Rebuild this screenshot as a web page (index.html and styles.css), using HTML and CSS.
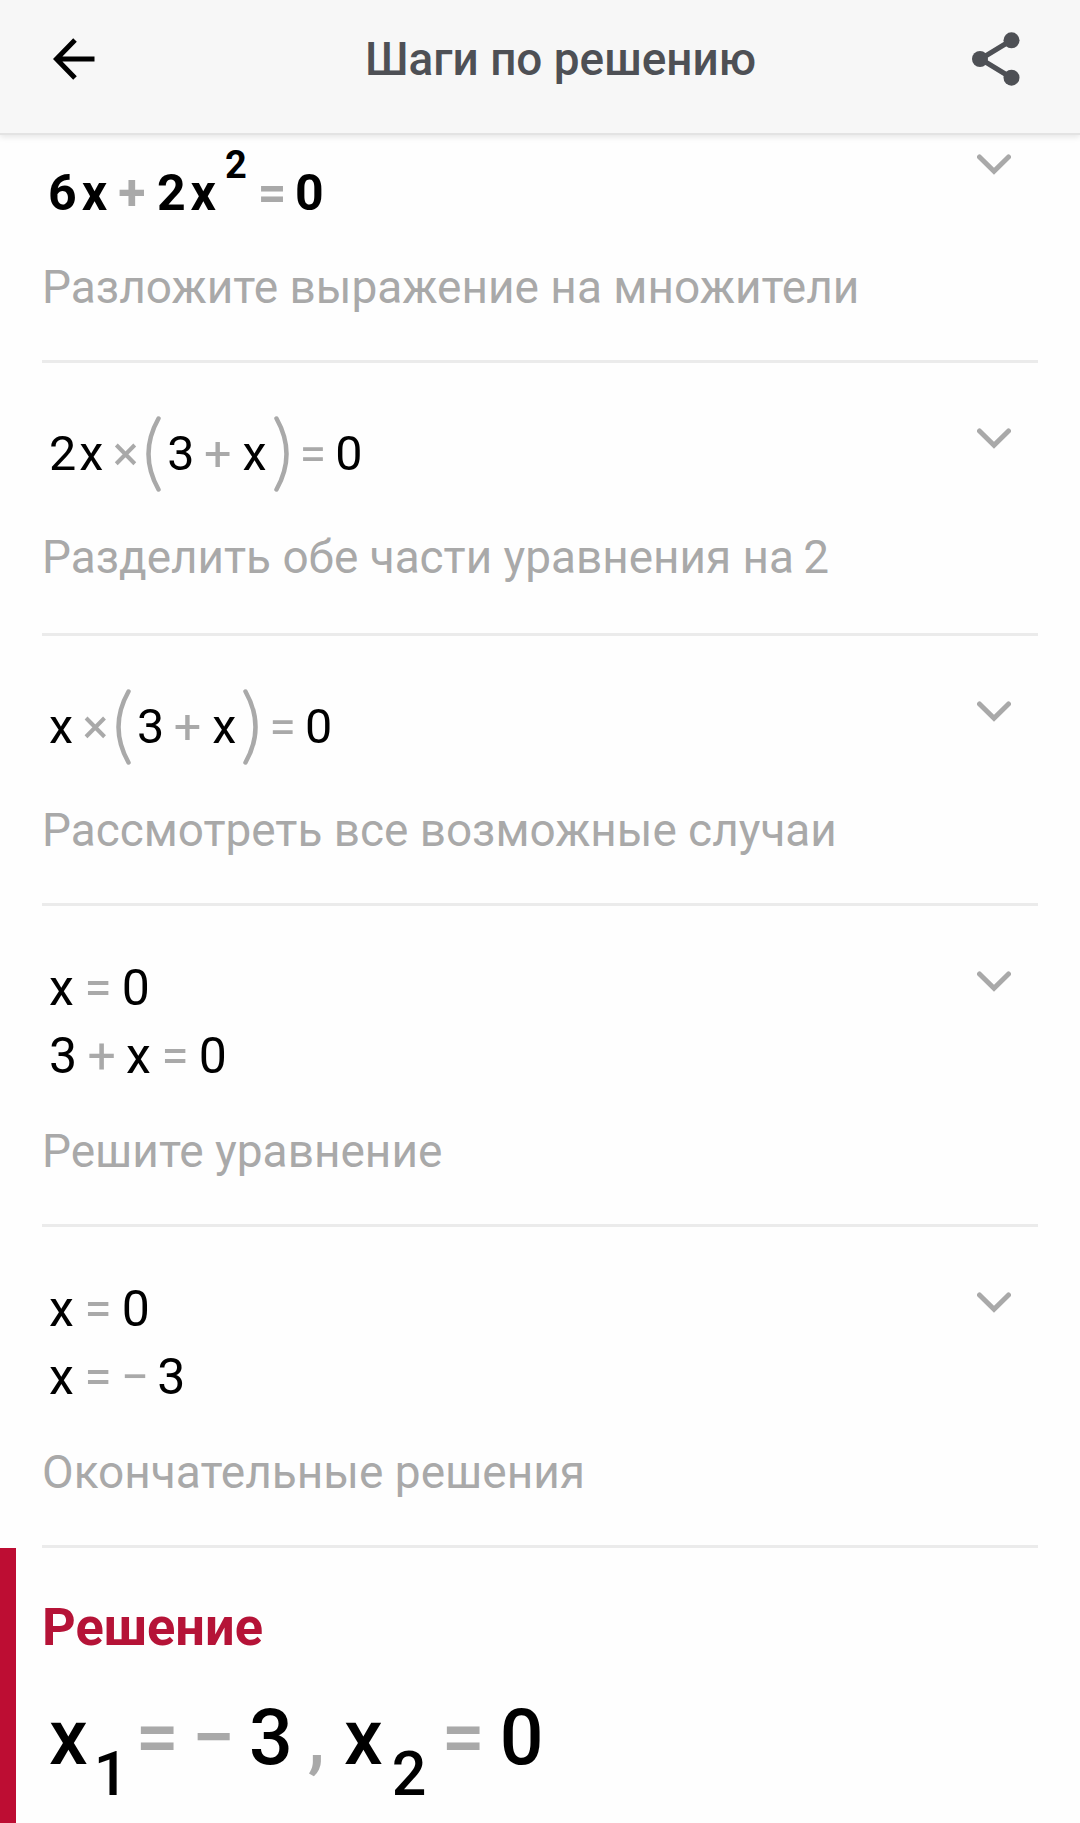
FILE: index.html
```html
<!DOCTYPE html>
<html lang="ru">

<head>
    <meta charset="UTF-8">
    <meta name="viewport" content="width=device-width, initial-scale=1.0">

    <title>Шаги по решению</title>
    <link rel="stylesheet" href="styles.css">
</head>
<body>
    <header class="topbar">
        <svg class="back" viewBox="0 0 42 42"><path d="M41.500 21H4M22 2L3.500 21L22 40" fill="none" stroke="#000" stroke-width="5"/></svg>
        <h1>Шаги по решению</h1>
        <svg class="share" viewBox="0 0 48 54">
            <path d="M39 8.500L8.500 27L39 45.500" fill="none" stroke="#4e5055" stroke-width="5"/>
            <circle cx="39.500" cy="8.300" r="8"/>
            <circle cx="8" cy="27" r="8"/>
            <circle cx="39.500" cy="45.700" r="8"/>
        </svg>
    </header>

    <main>
        <section class="step first">
            <div class="eq bold">
                <span>6</span><span class="near">x</span><i>+</i><span>2</span><span class="near">x</span><sup>2</sup><i>=</i><span class="last">0</span>
            </div>
            <svg class="chevron" viewBox="0 0 34 21"><path d="M2.500 3L17 17.300L31.500 3"/></svg>
            <p>Разложите выражение на множители</p>
        </section>

        <section class="step product tall">
            <div class="eq">
                <span>2</span><span class="near">x</span><i>×</i><svg class="paren" viewBox="0 0 15 76"><path d="M12.500 2.500Q-7.500 38 12.500 73.500"/></svg><span>3</span><i>+</i><span>x</span><svg class="paren right" viewBox="0 0 15 76"><path d="M2.500 2.500Q22.500 38 2.500 73.500"/></svg><i>=</i><span class="last">0</span>
            </div>
            <svg class="chevron" viewBox="0 0 34 21"><path d="M2.500 3L17 17.300L31.500 3"/></svg>
            <p>Разделить обе части уравнения на <span class="num">2</span></p>
        </section>

        <section class="step product">
            <div class="eq">
                <span>x</span><i>×</i><svg class="paren" viewBox="0 0 15 76"><path d="M12.500 2.500Q-7.500 38 12.500 73.500"/></svg><span>3</span><i>+</i><span>x</span><svg class="paren right" viewBox="0 0 15 76"><path d="M2.500 2.500Q22.500 38 2.500 73.500"/></svg><i>=</i><span class="last">0</span>
            </div>
            <svg class="chevron" viewBox="0 0 34 21"><path d="M2.500 3L17 17.300L31.500 3"/></svg>
            <p>Рассмотреть все возможные случаи</p>
        </section>

        <section class="step pair">
            <div class="eq"><span>x</span><i>=</i><span>0</span></div>
            <div class="eq"><span>3</span><i>+</i><span>x</span><i>=</i><span>0</span></div>
            <svg class="chevron" viewBox="0 0 34 21"><path d="M2.500 3L17 17.300L31.500 3"/></svg>
            <p>Решите уравнение</p>
        </section>

        <section class="step pair">
            <div class="eq"><span>x</span><i>=</i><span>0</span></div>
            <div class="eq"><span>x</span><i>=</i><i class="minus">−</i><span>3</span></div>
            <svg class="chevron" viewBox="0 0 34 21"><path d="M2.500 3L17 17.300L31.500 3"/></svg>
            <p>Окончательные решения</p>
        </section>

        <section class="answer">
            <h2>Решение</h2>
            <div class="eq big">
                <span>x</span><sub class="one">1</sub><i>=</i><i class="minus">−</i><span>3</span><i class="comma">,</i><span>x</span><sub>2</sub><i>=</i><span>0</span>
            </div>
        </section>
    </main>
</body>

</html>
```
FILE: styles.css
```css
* {
    box-sizing: border-box;
}

body {
    margin: 0;
    height: 1823px;
    overflow: hidden;
    background-color: #fefefe;
    font-family: Roboto, "Noto Sans", sans-serif;
}

/* top bar */
.topbar {
    position: relative;
    display: flex;
    justify-content: space-between;
    align-items: center;
    height: 135px;
    padding: 0 60px 15px 53px;
    background-color: #f7f7f7;
    border-bottom: 2px solid #e3e3e3;
    box-shadow: 0 2px 6px rgba(0, 0, 0, 0.1);
}

.topbar h1 {
    margin: 0 0 0 54px;
    color: #4e5055;
    font-size: 45.9px;
    font-weight: 500;
    line-height: 54px;
}

.back {
    width: 42px;
    height: 42px;
}

.share {
    width: 48px;
    height: 54px;
    fill: #4e5055;
}

/* steps */
.step {
    display: grid;
    grid-template-columns: 1fr 34px;
    align-content: start;
    height: 321px;
    margin: 0 42px;
    padding: 52px 27px 0 0;
    border-bottom: 3px solid #ebebeb;
}

.step.first {
    height: 228px;
    padding-top: 19px;
}

.step.product {
    height: 270px;
}

.step.product.tall {
    height: 273px;
}

.step p {
    grid-column: 1;
    margin: 0;
    color: #a9a9a9;
    font-size: 46px;
    line-height: 54px;
    white-space: nowrap;
}

.step p .num {
    margin-left: -2px;
}

.chevron {
    grid-column: 2;
    grid-row: 1;
    width: 34px;
    height: 21px;
    margin-top: 13px;
    fill: none;
    stroke: #a9a9a9;
    stroke-width: 5;
    stroke-linecap: round;
}

.step.first .chevron {
    margin-top: 0;
}

/* equations */
.eq {
    grid-column: 1;
    display: flex;
    align-items: baseline;
    gap: 10px;
    height: 68px;
    padding-left: 7px;
    color: #000;
    font-size: 50px;
    line-height: 60px;
}

.eq i {
    color: #a9a9a9;
    font-style: normal;
}

.eq .near {
    margin-left: -6px;
}

.eq .last {
    margin-left: -3px;
}

.pair .eq i {
    margin-left: 0.5px;
}

.pair .eq .minus {
    margin: 0 -2px 0 -1px;
}

.pair p {
    margin-top: 30px;
}

.product .eq {
    align-items: center;
    height: 78px;
    padding-left: 7px;
    font-size: 48.5px;
}

.product .eq .near {
    margin-left: -7px;
}

.product .eq i {
    margin: 0 1px 0 -0.5px;
}

.product .eq .last {
    margin-left: -2px;
}

.product p {
    margin-top: 37px;
    font-size: 45.9px;
}

.paren {
    width: 15px;
    height: 76px;
    margin: 0 -4px 0 -3.5px;
    fill: none;
    stroke: #a9a9a9;
    stroke-width: 4.5;
    stroke-linecap: round;
}

.paren.right {
    margin: 0 1.5px 0 -3px;
}

.bold {
    height: 83px;
    margin-top: 9px;
    padding-left: 6px;
    font-weight: 700;
}

.bold + .chevron + p {
    margin-top: 14px;
}

.eq.bold .near {
    margin-left: -5px;
}

.bold i {
    margin: 0 1.5px 0 1px;
}

.bold sup {
    position: relative;
    top: -32px;
    margin-left: -1px;
    font-size: 38px;
    line-height: 0;
    vertical-align: baseline;
}

/* final answer */
.answer {
    height: 276px;
    padding: 49px 26px 0;
    border-left: 16px solid #bd0d33;
}

.answer h2 {
    margin: 0;
    color: #b51337;
    font-size: 52.4px;
    font-weight: 700;
    line-height: 60px;
}

.big {
    gap: 15px;
    height: 110px;
    margin-top: 36px;
    font-size: 77px;
    font-weight: 500;
    line-height: 90px;
}

.big .minus {
    margin: 0 -1px 0 -2px;
}

.big .comma {
    margin-right: 4px;
}

.big sub {
    position: relative;
    top: 31px;
    margin-left: -6px;
    font-size: 61px;
    line-height: 0;
    vertical-align: baseline;
}

.big .one {
    margin: 0 -8px 0 -9px;
}
```
